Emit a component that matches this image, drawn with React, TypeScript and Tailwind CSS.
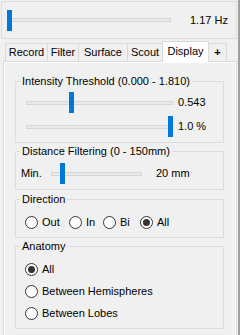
import { ReactNode } from "react";

function Slider({ className, thumb }: { className: string; thumb: number }) {
  return (
    <div className={"relative flex items-center h-[21px] " + className}>
      <div className="w-full h-[4px] border border-[#d6d6d6] bg-[#e7eaea]" />
      <div
        className="absolute top-0 w-[5px] h-[21px] bg-[#0078d7]"
        style={{ left: thumb }}
      />
    </div>
  );
}

function Radio({ label, checked, className }: { label: string; checked?: boolean; className?: string }) {
  return (
    <div className={"flex items-center h-[15px] " + (className ?? "")}>
      <span className="w-[13px] h-[13px] rounded-full border border-[#333333] bg-white flex items-center justify-center">
        {checked && <span className="w-[7px] h-[7px] rounded-full bg-[#333333]" />}
      </span>
      <span className="ml-[4px]">{label}</span>
    </div>
  );
}

function Group({ title, className, children }: { title: string; className: string; children: ReactNode }) {
  return (
    <fieldset className={"w-[209px] border border-[#dcdcdc] " + className}>
      <legend className="ml-[4px] px-[2px] leading-[13px]">{title}</legend>
      {children}
    </fieldset>
  );
}

const tabs = [
  { name: "Record", w: "w-[42px]" },
  { name: "Filter", w: "w-[31px]" },
  { name: "Surface", w: "w-[49px]" },
  { name: "Scout", w: "w-[35px]" },
];

export default function App() {
  return (
    <div className="w-[240px] h-[335px] overflow-hidden bg-[#f0f0f0] flex font-['Liberation_Sans',Arial,sans-serif] text-[11px] leading-[13px] text-black">
      <div className="w-[237px] flex flex-col">
        {/* Frequency slider */}
        <div className="ml-[1px] mt-[1px] w-[236px] h-[38px] shrink-0 border border-[#dcdcdc] flex items-center pl-[5px]">
          <Slider className="w-[164px]" thumb={0} />
          <span className="ml-[19px]">1.17 Hz</span>
        </div>

        {/* Tabs */}
        <div className="ml-[5px] mt-[2px] h-[20px] shrink-0 flex items-end">
          {tabs.map((t) => (
            <div
              key={t.name}
              className={"h-[18px] border-l border-t border-[#d9d9d9] flex items-center justify-center " + t.w}
            >
              {t.name}
            </div>
          ))}
          <div className="relative z-10 -mb-[1px] w-[47px] h-[21px] border-l border-t border-r border-[#d9d9d9] bg-white flex items-center justify-center pb-[2px]">
            Display
          </div>
          <div className="w-[18px] h-[18px] border-t border-r border-[#d9d9d9] flex items-center justify-center font-bold">
            +
          </div>
        </div>

        {/* Display panel */}
        <div className="ml-[3px] w-[234px] h-[300px] shrink-0 border border-[#d9d9d9]">
          <div className="h-full border border-white pt-[12px] pl-[10px]">
            <Group title="Intensity Threshold (0.000 - 1.810)" className="h-[68px]">
              <div className="flex items-center mt-[4px] ml-[10px]">
                <Slider className="w-[147px]" thumb={(0.543 / 1.81) * 142} />
                <span className="ml-[5px]">0.543</span>
              </div>
              <div className="flex items-center mt-[3px] ml-[10px]">
                <Slider className="w-[147px]" thumb={142} />
                <span className="ml-[5px]">1.0 %</span>
              </div>
            </Group>

            <Group title="Distance Filtering (0 - 150mm)" className="h-[45px] mt-[2px]">
              <div className="flex items-center mt-[5px] ml-[5px]">
                <span className="w-[30px]">Min.</span>
                <Slider className="w-[91px]" thumb={9} />
                <span className="ml-[14px]">20 mm</span>
              </div>
            </Group>

            <Group title="Direction" className="h-[45px] mt-[3px]">
              <div className="flex mt-[9px] ml-[9px]">
                <Radio label="Out" className="w-[44px]" />
                <Radio label="In" className="w-[34px]" />
                <Radio label="Bi" className="w-[37px]" />
                <Radio label="All" checked />
              </div>
            </Group>

            <Group title="Anatomy" className="h-[89px] mt-[2px]">
              <div className="flex flex-col gap-[7px] mt-[9px] ml-[9px]">
                <Radio label="All" checked />
                <Radio label="Between Hemispheres" />
                <Radio label="Between Lobes" />
              </div>
            </Group>
          </div>
        </div>
      </div>
      <div className="w-[1px]" />
      <div className="w-[2px] bg-[#a0a0a0]" />
    </div>
  );
}
